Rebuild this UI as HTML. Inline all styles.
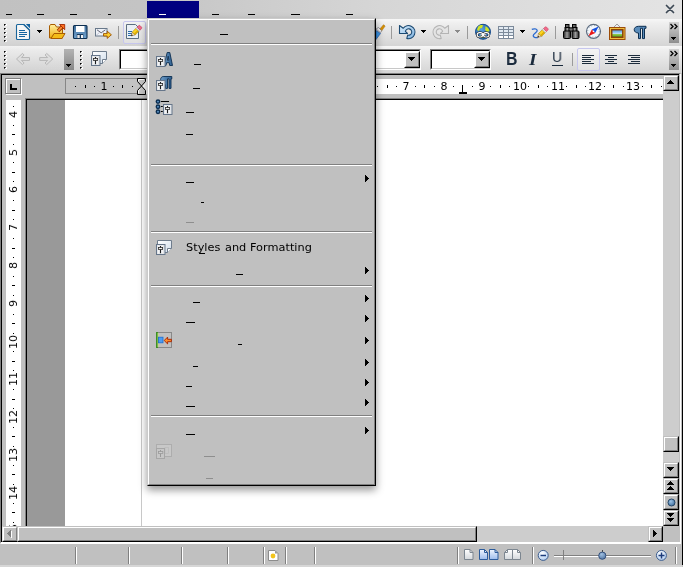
<!DOCTYPE html>
<html><head><meta charset="utf-8"><title>Writer</title>
<style>
*{box-sizing:border-box;margin:0;padding:0}
html,body{width:683px;height:567px;overflow:hidden;background:#c0c0c0;font-family:"DejaVu Sans","Liberation Sans",sans-serif;font-size:11px;color:#000}
div,svg,span{position:absolute}
span{will-change:transform}
#menubar{left:0;top:0;width:682px;height:19px;background:linear-gradient(90deg,#c1c1c1 0,#c4c4c4 140px,#d6d6d6 380px,#e4e4e4 683px)}
.u{height:1px;background:#000}
.ug{height:1px;background:#8e8e8e}
.tb{left:0;width:682px;height:27px;background:linear-gradient(90deg,rgba(0,0,0,.02),rgba(0,0,0,0) 60%),linear-gradient(180deg,#f7f7f7 0,#efefef 15%,#d5d5d5 100%)}
#work{left:0;top:73px;width:681px;height:471px;background:#c0c0c0;border-left:1px solid #808080;border-top:1px solid #808080;border-right:1px solid #fff;border-bottom:2px solid #fff}
#work2{left:1px;top:74px;width:678px;height:468px;border-left:1px solid #000;border-top:1px solid #000}
#status{left:0;top:544px;width:682px;height:23px;background:#c0c0c0;border-bottom:2px solid #d6d6d6}
#menu{left:147px;top:18px;width:229px;height:468px;background:#c0c0c0;border:1px solid;border-color:#cacaca #000 #000 #cacaca;box-shadow:0 4px 8px rgba(0,0,0,.42)}
#menu2{left:148px;top:19px;width:227px;height:466px;border:1px solid;border-color:#fff #808080 #808080 #fff}
.sep{left:151px;width:221px;height:2px;border-top:1px solid #808080;border-bottom:1px solid #fff}
.arr{left:365px;width:0;height:0;border-left:4px solid #000;border-top:3.5px solid transparent;border-bottom:3.5px solid transparent}
.rt{will-change:transform;font-size:11px;line-height:11px;white-space:nowrap}
.btn{background:#c0c0c0;border:1px solid;border-color:#c0c0c0 #000 #000 #c0c0c0}
.btn:after{content:"";position:absolute;left:0;top:0;right:0;bottom:0;border:1px solid;border-color:#fff #808080 #808080 #fff}
.ssep{width:2px;height:17px;top:547px;border-left:1px solid #808080;border-right:1px solid #fff}
.tsep{width:1px;height:13px;background:#9a9a9a}
.combo{height:21px;top:49px;background:#fff;border:1px solid;border-color:#808080 #fff #fff #808080}
.combo:after{content:"";position:absolute;left:0;top:0;right:0;bottom:0;border:1px solid;border-color:#000 #c8c8c8 #c8c8c8 #000}
.ovf{width:10px;height:21px}
.hl{border:1px solid #c6c6ee;border-radius:2px;background:rgba(255,255,255,.25)}
.dot{width:2px;height:2px;background:#000}
.dotw{width:2px;height:2px;background:#fff}
</style></head><body>
<div id="menubar"></div>
<div class="tb" style="top:19px"></div>
<div class="tb" style="top:46px"></div>
<div id="work"></div><div id="work2"></div>
<div id="status"></div>
<div style="left:682px;top:0;width:1px;height:565px;background:#000"></div>

<div class="u" style="left:6px;top:14px;width:6px"></div>
<div class="u" style="left:37px;top:14px;width:7px"></div>
<div class="u" style="left:70px;top:14px;width:7px"></div>
<div class="u" style="left:108px;top:14px;width:3px"></div>
<div class="u" style="left:212px;top:14px;width:7px"></div>
<div class="u" style="left:248px;top:14px;width:7px"></div>
<div class="u" style="left:291px;top:14px;width:9px"></div>
<div class="u" style="left:346px;top:14px;width:7px"></div>
<div style="left:147px;top:1px;width:52px;height:17px;background:#000080"></div>
<div class="u" style="left:159px;top:14px;width:7px;background:#fff"></div>
<svg style="left:663px;top:2px" width="14" height="14" viewBox="663 2 14 14"><path d="M666.5 5.5l7 7M673.5 5.5l-7 7" stroke="#3c4854" stroke-width="1.7" stroke-linecap="round"/></svg>
<div class="dotw" style="left:5px;top:24px"></div><div class="dot" style="left:4px;top:24px;background:#555"></div><div class="dot" style="left:4px;top:24px;width:1px;height:1px"></div><div class="dotw" style="left:5px;top:25px;width:1px;height:1px"></div>
<div class="dotw" style="left:5px;top:28px"></div><div class="dot" style="left:4px;top:28px;background:#555"></div><div class="dot" style="left:4px;top:28px;width:1px;height:1px"></div><div class="dotw" style="left:5px;top:29px;width:1px;height:1px"></div>
<div class="dotw" style="left:5px;top:32px"></div><div class="dot" style="left:4px;top:32px;background:#555"></div><div class="dot" style="left:4px;top:32px;width:1px;height:1px"></div><div class="dotw" style="left:5px;top:33px;width:1px;height:1px"></div>
<div class="dotw" style="left:5px;top:36px"></div><div class="dot" style="left:4px;top:36px;background:#555"></div><div class="dot" style="left:4px;top:36px;width:1px;height:1px"></div><div class="dotw" style="left:5px;top:37px;width:1px;height:1px"></div>
<div class="dotw" style="left:5px;top:40px"></div><div class="dot" style="left:4px;top:40px;background:#555"></div><div class="dot" style="left:4px;top:40px;width:1px;height:1px"></div><div class="dotw" style="left:5px;top:41px;width:1px;height:1px"></div>
<div class="dotw" style="left:5px;top:51px"></div><div class="dot" style="left:4px;top:51px;background:#555"></div><div class="dot" style="left:4px;top:51px;width:1px;height:1px"></div><div class="dotw" style="left:5px;top:52px;width:1px;height:1px"></div>
<div class="dotw" style="left:5px;top:55px"></div><div class="dot" style="left:4px;top:55px;background:#555"></div><div class="dot" style="left:4px;top:55px;width:1px;height:1px"></div><div class="dotw" style="left:5px;top:56px;width:1px;height:1px"></div>
<div class="dotw" style="left:5px;top:59px"></div><div class="dot" style="left:4px;top:59px;background:#555"></div><div class="dot" style="left:4px;top:59px;width:1px;height:1px"></div><div class="dotw" style="left:5px;top:60px;width:1px;height:1px"></div>
<div class="dotw" style="left:5px;top:63px"></div><div class="dot" style="left:4px;top:63px;background:#555"></div><div class="dot" style="left:4px;top:63px;width:1px;height:1px"></div><div class="dotw" style="left:5px;top:64px;width:1px;height:1px"></div>
<div class="dotw" style="left:5px;top:67px"></div><div class="dot" style="left:4px;top:67px;background:#555"></div><div class="dot" style="left:4px;top:67px;width:1px;height:1px"></div><div class="dotw" style="left:5px;top:68px;width:1px;height:1px"></div>
<div class="dotw" style="left:81px;top:51px"></div><div class="dot" style="left:80px;top:51px;background:#555"></div><div class="dot" style="left:80px;top:51px;width:1px;height:1px"></div><div class="dotw" style="left:81px;top:52px;width:1px;height:1px"></div>
<div class="dotw" style="left:81px;top:55px"></div><div class="dot" style="left:80px;top:55px;background:#555"></div><div class="dot" style="left:80px;top:55px;width:1px;height:1px"></div><div class="dotw" style="left:81px;top:56px;width:1px;height:1px"></div>
<div class="dotw" style="left:81px;top:59px"></div><div class="dot" style="left:80px;top:59px;background:#555"></div><div class="dot" style="left:80px;top:59px;width:1px;height:1px"></div><div class="dotw" style="left:81px;top:60px;width:1px;height:1px"></div>
<div class="dotw" style="left:81px;top:63px"></div><div class="dot" style="left:80px;top:63px;background:#555"></div><div class="dot" style="left:80px;top:63px;width:1px;height:1px"></div><div class="dotw" style="left:81px;top:64px;width:1px;height:1px"></div>
<div class="dotw" style="left:81px;top:67px"></div><div class="dot" style="left:80px;top:67px;background:#555"></div><div class="dot" style="left:80px;top:67px;width:1px;height:1px"></div><div class="dotw" style="left:81px;top:68px;width:1px;height:1px"></div>
<div class="tsep" style="left:118px;top:26px"></div>
<div class="tsep" style="left:391px;top:26px"></div>
<div class="tsep" style="left:467px;top:26px"></div>
<div class="tsep" style="left:555px;top:26px"></div>
<div class="tsep" style="left:572px;top:53px"></div>
<div style="left:37px;top:30px;width:5px;height:1px;background:#000"></div>
<div style="left:38px;top:31px;width:3px;height:1px;background:#000"></div>
<div style="left:39px;top:32px;width:1px;height:1px;background:#000"></div>
<div style="left:421px;top:30px;width:5px;height:1px;background:#000"></div>
<div style="left:422px;top:31px;width:3px;height:1px;background:#000"></div>
<div style="left:423px;top:32px;width:1px;height:1px;background:#000"></div>
<div style="left:455px;top:30px;width:5px;height:1px;background:#8a8a8a"></div>
<div style="left:456px;top:31px;width:3px;height:1px;background:#8a8a8a"></div>
<div style="left:457px;top:32px;width:1px;height:1px;background:#8a8a8a"></div>
<div style="left:520px;top:30px;width:5px;height:1px;background:#000"></div>
<div style="left:521px;top:31px;width:3px;height:1px;background:#000"></div>
<div style="left:522px;top:32px;width:1px;height:1px;background:#000"></div>
<div class="ovf" style="left:669px;top:22px;background:linear-gradient(180deg,#d2d2d2,#8e8e8e)"></div>
<div class="ovf" style="left:669px;top:49px;background:linear-gradient(180deg,#d2d2d2,#8e8e8e)"></div>
<div class="ovf" style="left:64px;top:49px;background:linear-gradient(180deg,#b4b4b4,#868686)"></div>
<div style="left:671px;top:37px;width:5px;height:1px;background:#000"></div>
<div style="left:672px;top:38px;width:3px;height:1px;background:#000"></div>
<div style="left:673px;top:39px;width:1px;height:1px;background:#000"></div>
<div style="left:671px;top:64px;width:5px;height:1px;background:#000"></div>
<div style="left:672px;top:65px;width:3px;height:1px;background:#000"></div>
<div style="left:673px;top:66px;width:1px;height:1px;background:#000"></div>
<div style="left:66px;top:64px;width:5px;height:1px;background:#000"></div>
<div style="left:67px;top:65px;width:3px;height:1px;background:#000"></div>
<div style="left:68px;top:66px;width:1px;height:1px;background:#000"></div>
<svg style="left:669px;top:23px" width="10" height="7" viewBox="0 0 10 7"><path d="M1.5 1l2.5 2.5L1.5 6M5.5 1L8 3.5 5.5 6" stroke="#000" stroke-width="1.3" fill="none"/></svg>
<svg style="left:669px;top:50px" width="10" height="7" viewBox="0 0 10 7"><path d="M1.5 1l2.5 2.5L1.5 6M5.5 1L8 3.5 5.5 6" stroke="#000" stroke-width="1.3" fill="none"/></svg>
<div class="hl" style="left:123px;top:21px;width:23px;height:23px"></div>
<div class="hl" style="left:577px;top:48px;width:23px;height:23px"></div>
<div class="combo" style="left:119px;width:302px"></div>
<div class="btn" style="left:404px;top:51px;width:16px;height:17px;border-color:#fff #000 #000 #fff"></div>
<div style="left:408px;top:57px;width:7px;height:1px;background:#000"></div>
<div style="left:409px;top:58px;width:5px;height:1px;background:#000"></div>
<div style="left:410px;top:59px;width:3px;height:1px;background:#000"></div>
<div style="left:411px;top:60px;width:1px;height:1px;background:#000"></div>
<div class="combo" style="left:430px;width:61px"></div>
<div class="btn" style="left:474px;top:51px;width:16px;height:17px;border-color:#fff #000 #000 #fff"></div>
<div style="left:478px;top:57px;width:7px;height:1px;background:#000"></div>
<div style="left:479px;top:58px;width:5px;height:1px;background:#000"></div>
<div style="left:480px;top:59px;width:3px;height:1px;background:#000"></div>
<div style="left:481px;top:60px;width:1px;height:1px;background:#000"></div>
<span style="left:505.5px;top:50px;font:bold 17.5px/19px 'Liberation Sans',sans-serif;color:#1a2a3c;transform:scaleX(.9);transform-origin:0 0">B</span>
<span style="left:529px;top:49.5px;font:italic bold 17.5px/19px 'Liberation Serif',serif;color:#1a2a3c;transform:scaleX(1.1);transform-origin:0 0">I</span>
<span style="left:552.3px;top:48px;font:15px/17px 'Liberation Sans',sans-serif;color:#1a2a3c;transform:scaleX(.93);transform-origin:0 0">U</span><div style="left:552px;top:65px;width:11px;height:1px;background:#1a2a3c"></div>
<div style="left:582px;top:55px;width:12px;height:1px;background:#1c2c3c"></div>
<div style="left:582px;top:57px;width:9px;height:1px;background:#1c2c3c"></div>
<div style="left:582px;top:59px;width:12px;height:1px;background:#1c2c3c"></div>
<div style="left:582px;top:61px;width:9px;height:1px;background:#1c2c3c"></div>
<div style="left:582px;top:63px;width:12px;height:1px;background:#1c2c3c"></div>
<div style="left:605px;top:55px;width:12px;height:1px;background:#1c2c3c"></div>
<div style="left:608px;top:57px;width:6px;height:1px;background:#1c2c3c"></div>
<div style="left:605px;top:59px;width:12px;height:1px;background:#1c2c3c"></div>
<div style="left:608px;top:61px;width:6px;height:1px;background:#1c2c3c"></div>
<div style="left:605px;top:63px;width:12px;height:1px;background:#1c2c3c"></div>
<div style="left:628px;top:55px;width:12px;height:1px;background:#1c2c3c"></div>
<div style="left:631px;top:57px;width:9px;height:1px;background:#1c2c3c"></div>
<div style="left:628px;top:59px;width:12px;height:1px;background:#1c2c3c"></div>
<div style="left:631px;top:61px;width:9px;height:1px;background:#1c2c3c"></div>
<div style="left:628px;top:63px;width:12px;height:1px;background:#1c2c3c"></div>
<svg style="left:0;top:19px" width="682" height="54" viewBox="0 19 682 54">
<defs>
<linearGradient id="gy" x1="0" y1="0" x2="0" y2="1"><stop offset="0" stop-color="#fff0a0"/><stop offset="1" stop-color="#f0b010"/></linearGradient>
<linearGradient id="gb" x1="0" y1="0" x2="0" y2="1"><stop offset="0" stop-color="#3f6c98"/><stop offset="1" stop-color="#74a6d2"/></linearGradient>
<linearGradient id="gu" x1="0" y1="0" x2="1" y2="1"><stop offset="0" stop-color="#d6ecfc"/><stop offset="1" stop-color="#7fb2e0"/></linearGradient>
<linearGradient id="gs" x1="0" y1="0" x2="1" y2="1"><stop offset="0" stop-color="#ffffff"/><stop offset="1" stop-color="#cfdcea"/></linearGradient>
<linearGradient id="gk" x1="0" y1="0" x2="1" y2="0"><stop offset="0" stop-color="#222"/><stop offset=".5" stop-color="#9a9a9a"/><stop offset="1" stop-color="#222"/></linearGradient>
<radialGradient id="gg" cx=".4" cy=".35" r=".7"><stop offset="0" stop-color="#5aa0e0"/><stop offset="1" stop-color="#1c5aa0"/></radialGradient>
<linearGradient id="gpic" x1="0" y1="0" x2="0" y2="1"><stop offset="0" stop-color="#3c8ce0"/><stop offset=".5" stop-color="#b8dcf4"/><stop offset=".55" stop-color="#a0d050"/><stop offset="1" stop-color="#3c9c20"/></linearGradient>
<g id="pin"><rect x=".5" y=".5" width="8.5" height="10" fill="#e2e5e9" stroke="#66768a"/><path d="M2.5 1.5v8M6.5 1.5v8" stroke="#f4f4f4" stroke-width="1"/><path d="M4.5 2v7.2" stroke="#1a1a1a" stroke-width="1"/><rect x="2.4" y="3.5" width="4.2" height="1.9" fill="#f0f0f0" stroke="#2a2a2a" stroke-width=".8"/></g>
<g id="pencil"><g transform="rotate(-45)"><path d="M0 0L3.6-2.1V2.1z" fill="#f2dcb4" stroke="#8a6a3a" stroke-width=".5"/><path d="M0 0l1.5-.9v1.8z" fill="#111"/><rect x="3.6" y="-2.1" width="5.2" height="4.2" fill="#fad420" stroke="#a88000" stroke-width=".5"/><path d="M3.6 1h5.2" stroke="#d8a400" stroke-width="1.2"/><rect x="8.8" y="-2.1" width="1.6" height="4.2" fill="#e4e8ec" stroke="#8890a0" stroke-width=".4"/><path d="M10.4-2.1h2a1.2 1.2 0 0 1 1.2 1.2v1.8a1.2 1.2 0 0 1-1.2 1.2h-2z" fill="#f26a8a" stroke="#c23456" stroke-width=".5"/></g></g>
</defs>
<!-- new doc -->
<path d="M17.5 24.5h6.3l5.7 5.7v8.3a1 1 0 0 1-1 1h-11a1 1 0 0 1-1-1v-13a1 1 0 0 1 1-1z" fill="#f6f6f6" stroke="#19659b" stroke-width="1.1"/>
<path d="M23.8 24.5l5.7 5.7" stroke="#19659b" stroke-width="1.1"/><path d="M25.8 24h4.2v4.2z" fill="#1262a0"/>
<path d="M19 30.5h6M19 32.5h8M19 34.5h8M19 36.5h6" stroke="#1565a0" stroke-width="1"/>
<!-- open -->
<path d="M49.5 38V26l1-1.5h4.5l1.5 2.5h6v11z" fill="url(#gy)" stroke="#a85c00" stroke-width="1"/>
<path d="M51 38.5l3-5h11l-3 5z" fill="#f4bc18" stroke="#a85c00" stroke-width="1"/>
<path d="M58 31l4-4" stroke="#a03000" stroke-width="3.6"/><path d="M58.3 30.7l4-4" stroke="#ff9030" stroke-width="1.8"/><path d="M59.5 24.5h5.2v5.2z" fill="#ff7020" stroke="#a02800" stroke-width=".9"/>
<!-- save -->
<rect x="73.5" y="25.5" width="13.5" height="13" rx="1" fill="url(#gb)" stroke="#0c2e50" stroke-width="1.1"/>
<rect x="76" y="26" width="8.5" height="6" fill="#fff"/><rect x="76.8" y="34" width="6.5" height="4.5" fill="#16385c"/><rect x="77.3" y="35" width="2.4" height="3" fill="#e8e8e8"/><rect x="81" y="35" width="2" height="3" fill="#f4f4f4"/>
<!-- mail -->
<rect x="95.5" y="28.5" width="11.5" height="7.5" fill="#eef2f8" stroke="#68788a" stroke-width="1"/><path d="M97 29.8l4.2 3 4.2-3" fill="none" stroke="#556" stroke-width=".9"/><path d="M96 35.5l3.5-3M106.5 35.5l-3.5-3" stroke="#aab" stroke-width=".6"/>
<path d="M103.5 33.6h3.7v-2.4l4.2 3.6-4.2 3.6v-2.4h-3.7z" fill="#ffd030" stroke="#9a5000" stroke-width=".9"/>
<!-- edit doc -->
<path d="M126.5 24.5h9l3 3v11h-12z" fill="#eaf0f6" stroke="#5c6e80" stroke-width="1"/><path d="M128 31.5h4M128 33.5h4M128 35.5h4" stroke="#2a6aaa" stroke-width="1"/>
<use href="#pencil" x="131.2" y="36"/>
<!-- paintbrush partial -->
<path d="M379.5 29.5l4-4.8 1.6 1.4-3.6 5z" fill="#d89000" stroke="#a06800" stroke-width=".5"/><path d="M376 29l2.5-1.5 3.2 3.2-1.2 2z" fill="#f0f0f0" stroke="#667" stroke-width=".6"/><path d="M376 30.5l4.5 3-4.5 6z" fill="#3c98e8" stroke="#1c50a0" stroke-width=".6"/>
<!-- undo -->
<path d="M399.5 25.5V33.5H407.5L405.4 31.4A3.2 3.2 0 1 1 407.7 35.1L406.8 38.4A6.5 6.5 0 1 0 403.2 28.3Z" fill="url(#gu)" stroke="#1c4a72" stroke-width="1.1" stroke-linejoin="round"/>
<!-- redo (disabled) -->
<path transform="translate(848 0) scale(-1 1)" d="M399.5 25.5V33.5H407.5L405.4 31.4A3.2 3.2 0 1 1 407.7 35.1L406.8 38.4A6.5 6.5 0 1 0 403.2 28.3Z" fill="#e4e4e4" stroke="#b4b4b4" stroke-width="1.1" stroke-linejoin="round"/>
<!-- hyperlink globe -->
<circle cx="483" cy="31.8" r="7.5" fill="url(#gg)" stroke="#164a88" stroke-width="1"/>
<path d="M478 27c1.5-2 4-2.5 5-1.5l-1 2.5-2 .5-1 2.5-2-1zM485 26.5c2 0 4 2 4.5 4.5l-2.5 1-2-2 .5-2z" fill="#cfe422"/><path d="M480 36l2-1.5 2 1.5-1 2.5z" fill="#7cb828"/>
<g fill="none"><rect x="477.2" y="32.6" width="5.6" height="4.4" rx="2.2" stroke="#1a1a1a" stroke-width="2.1"/><rect x="483.4" y="32.6" width="5.6" height="4.4" rx="2.2" stroke="#1a1a1a" stroke-width="2.1"/><path d="M481 34.8h5" stroke="#1a1a1a" stroke-width="2.1"/>
<rect x="477.2" y="32.6" width="5.6" height="4.4" rx="2.2" stroke="#fff" stroke-width="1.1"/><rect x="483.4" y="32.6" width="5.6" height="4.4" rx="2.2" stroke="#fff" stroke-width="1.1"/><path d="M480.6 34.8h5.6" stroke="#fff" stroke-width="1.1"/></g>
<!-- table -->
<rect x="498" y="26" width="16" height="13" fill="#7c8a9a"/>

<rect x="499" y="27" width="4" height="2" fill="#e2eaf2"/>
<rect x="504" y="27" width="4" height="2" fill="#e2eaf2"/>
<rect x="509" y="27" width="4" height="2" fill="#e2eaf2"/>
<rect x="499" y="30" width="4" height="2" fill="#e2eaf2"/>
<rect x="504" y="30" width="4" height="2" fill="#e2eaf2"/>
<rect x="509" y="30" width="4" height="2" fill="#e2eaf2"/>
<rect x="499" y="33" width="4" height="2" fill="#e2eaf2"/>
<rect x="504" y="33" width="4" height="2" fill="#e2eaf2"/>
<rect x="509" y="33" width="4" height="2" fill="#e2eaf2"/>
<rect x="499" y="36" width="4" height="2" fill="#ffffff"/>
<rect x="504" y="36" width="4" height="2" fill="#ffffff"/>
<rect x="509" y="36" width="4" height="2" fill="#ffffff"/>
<!-- draw -->
<path d="M531.8 29.3c2.2-.8 5-.6 5.4 1 .5 2-4 3.2-4 5.4 0 1.6 2.2 2.2 4.6 1.8" fill="none" stroke="#2a6ad0" stroke-width="1.3"/>
<use href="#pencil" x="537.6" y="37.4"/>
<!-- binoculars -->
<rect x="565.5" y="24.5" width="3.5" height="3" fill="#666" stroke="#000"/><rect x="572.5" y="24.5" width="3.5" height="3" fill="#666" stroke="#000"/>
<rect x="565" y="27.5" width="5" height="4" fill="url(#gk)" stroke="#000"/><rect x="572" y="27.5" width="5" height="4" fill="url(#gk)" stroke="#000"/>
<rect x="569" y="28" width="4" height="3" fill="#777" stroke="#000" stroke-width=".8"/>
<rect x="563.5" y="31" width="7" height="7.5" rx="1" fill="url(#gk)" stroke="#000"/><rect x="572" y="31" width="7" height="7.5" rx="1" fill="url(#gk)" stroke="#000"/>
<!-- compass -->
<circle cx="593.5" cy="31.3" r="7" fill="#f4f8fc" stroke="#5c6c80" stroke-width="1.2"/>
<circle cx="593.5" cy="31.3" r="5.8" fill="none" stroke="#8090a0" stroke-width="1" stroke-dasharray=".8 2.24"/>
<path d="M598.6 26.4l-6.8 3.2 3.4 3.4z" fill="#1450e0"/><path d="M588.4 36.2l6.8-3.2-3.4-3.4z" fill="#e81818"/><circle cx="593.5" cy="31.3" r=".9" fill="#fff"/>
<!-- gallery -->
<path d="M614 27l3-3 3 3" fill="none" stroke="#888" stroke-width=".8"/>
<rect x="609.5" y="27.5" width="15.5" height="12" fill="#f2c440" stroke="#9c4c08" stroke-width="1"/><rect x="611.7" y="29.7" width="11.1" height="7.6" fill="url(#gpic)" stroke="#8a4008" stroke-width="1.5"/>
<!-- pilcrow -->
<path d="M646 26.3h-7.5c-2.6 0-4.3 1.5-4.3 3.4s1.7 3.3 4.3 3.3v5.6h2v-10.3h2v10.3h2v-10.3h1.5z" fill="#5a8cba" stroke="#0c2e50" stroke-width="1" stroke-linejoin="round"/>
<!-- back/forward disabled -->
<path d="M16.5 59l6-5.6 1.6 1.6-2.6 2.6h8v2.8h-8l2.6 2.6-1.6 1.6z" fill="#dedede" stroke="#b6b6b6" stroke-width="1" stroke-linejoin="round"/>
<path d="M52.7 59l-6-5.6-1.6 1.6 2.6 2.6h-8v2.8h8l-2.6 2.6 1.6 1.6z" fill="#dedede" stroke="#b6b6b6" stroke-width="1" stroke-linejoin="round"/>
<!-- styles -->
<g id="sty"><path d="M92.5 51.5h14v8l-4 4h-10z" fill="url(#gs)" stroke="#6e7c8c"/><path d="M102.5 63.5v-4h4" fill="#fff" stroke="#6e7c8c"/><use href="#pin" x="91" y="55"/></g>
</svg>
<div style="left:6px;top:79px;width:16px;height:16px;border:1px solid #fff"></div>
<div style="left:5px;top:78px;width:16px;height:16px;border:1px solid #808080"></div>
<div style="left:10px;top:84px;width:2px;height:6px;background:#000"></div><div style="left:10px;top:88px;width:7px;height:2px;background:#000"></div>
<div style="left:65px;top:79px;width:598px;height:15px;background:#fff"></div>
<div style="left:65px;top:78px;width:77px;height:16px;background:#c3c3c3;border:1px solid #868686"></div>
<div style="left:6px;top:100px;width:15px;height:426px;background:#fff"></div>
<div style="left:25px;top:98px;width:638px;height:428px;background:#fff;border-left:1px solid #808080;border-top:1px solid #808080"></div>
<div style="left:26px;top:99px;width:637px;height:427px;border-left:1px solid #000;border-top:1px solid #000"></div>
<div style="left:27px;top:100px;width:38px;height:426px;background:#999"></div>
<div style="left:141px;top:100px;width:1px;height:426px;background:#c8c8c8"></div>
<div style="left:75px;top:86px;width:1px;height:1px;background:#000"></div>
<div style="left:85px;top:85px;width:1px;height:3px;background:#000"></div>
<div style="left:94px;top:86px;width:1px;height:1px;background:#000"></div>
<span class="rt" style="left:94px;top:81px;width:20px;text-align:center">1</span>
<div style="left:113px;top:86px;width:1px;height:1px;background:#000"></div>
<div style="left:122px;top:85px;width:1px;height:3px;background:#000"></div>
<div style="left:132px;top:86px;width:1px;height:1px;background:#000"></div>
<div style="left:150px;top:86px;width:1px;height:1px;background:#000"></div>
<div style="left:160px;top:85px;width:1px;height:3px;background:#000"></div>
<div style="left:169px;top:86px;width:1px;height:1px;background:#000"></div>
<span class="rt" style="left:169.6px;top:81px;width:20px;text-align:center">1</span>
<div style="left:188px;top:86px;width:1px;height:1px;background:#000"></div>
<div style="left:198px;top:85px;width:1px;height:3px;background:#000"></div>
<div style="left:207px;top:86px;width:1px;height:1px;background:#000"></div>
<span class="rt" style="left:207.4px;top:81px;width:20px;text-align:center">2</span>
<div style="left:226px;top:86px;width:1px;height:1px;background:#000"></div>
<div style="left:235px;top:85px;width:1px;height:3px;background:#000"></div>
<div style="left:245px;top:86px;width:1px;height:1px;background:#000"></div>
<span class="rt" style="left:245.2px;top:81px;width:20px;text-align:center">3</span>
<div style="left:264px;top:86px;width:1px;height:1px;background:#000"></div>
<div style="left:273px;top:85px;width:1px;height:3px;background:#000"></div>
<div style="left:283px;top:86px;width:1px;height:1px;background:#000"></div>
<span class="rt" style="left:283px;top:81px;width:20px;text-align:center">4</span>
<div style="left:301px;top:86px;width:1px;height:1px;background:#000"></div>
<div style="left:311px;top:85px;width:1px;height:3px;background:#000"></div>
<div style="left:320px;top:86px;width:1px;height:1px;background:#000"></div>
<span class="rt" style="left:320.8px;top:81px;width:20px;text-align:center">5</span>
<div style="left:339px;top:86px;width:1px;height:1px;background:#000"></div>
<div style="left:349px;top:85px;width:1px;height:3px;background:#000"></div>
<div style="left:358px;top:86px;width:1px;height:1px;background:#000"></div>
<span class="rt" style="left:358.6px;top:81px;width:20px;text-align:center">6</span>
<div style="left:377px;top:86px;width:1px;height:1px;background:#000"></div>
<div style="left:387px;top:85px;width:1px;height:3px;background:#000"></div>
<div style="left:396px;top:86px;width:1px;height:1px;background:#000"></div>
<span class="rt" style="left:396.4px;top:81px;width:20px;text-align:center">7</span>
<div style="left:415px;top:86px;width:1px;height:1px;background:#000"></div>
<div style="left:424px;top:85px;width:1px;height:3px;background:#000"></div>
<div style="left:434px;top:86px;width:1px;height:1px;background:#000"></div>
<span class="rt" style="left:434.2px;top:81px;width:20px;text-align:center">8</span>
<div style="left:453px;top:86px;width:1px;height:1px;background:#000"></div>
<div style="left:462px;top:85px;width:1px;height:3px;background:#000"></div>
<div style="left:472px;top:86px;width:1px;height:1px;background:#000"></div>
<span class="rt" style="left:472px;top:81px;width:20px;text-align:center">9</span>
<div style="left:490px;top:86px;width:1px;height:1px;background:#000"></div>
<div style="left:500px;top:85px;width:1px;height:3px;background:#000"></div>
<div style="left:509px;top:86px;width:1px;height:1px;background:#000"></div>
<span class="rt" style="left:509.8px;top:81px;width:20px;text-align:center">10</span>
<div style="left:528px;top:86px;width:1px;height:1px;background:#000"></div>
<div style="left:538px;top:85px;width:1px;height:3px;background:#000"></div>
<div style="left:547px;top:86px;width:1px;height:1px;background:#000"></div>
<span class="rt" style="left:547.6px;top:81px;width:20px;text-align:center">11</span>
<div style="left:566px;top:86px;width:1px;height:1px;background:#000"></div>
<div style="left:576px;top:85px;width:1px;height:3px;background:#000"></div>
<div style="left:585px;top:86px;width:1px;height:1px;background:#000"></div>
<span class="rt" style="left:585.4px;top:81px;width:20px;text-align:center">12</span>
<div style="left:604px;top:86px;width:1px;height:1px;background:#000"></div>
<div style="left:613px;top:85px;width:1px;height:3px;background:#000"></div>
<div style="left:623px;top:86px;width:1px;height:1px;background:#000"></div>
<span class="rt" style="left:623.2px;top:81px;width:20px;text-align:center">13</span>
<div style="left:642px;top:86px;width:1px;height:1px;background:#000"></div>
<div style="left:651px;top:85px;width:1px;height:3px;background:#000"></div>
<div style="left:661px;top:86px;width:1px;height:1px;background:#000"></div>
<div style="left:462px;top:88px;width:1px;height:6px;background:#000"></div><div style="left:459px;top:92px;width:8px;height:2px;background:#000"></div>
<svg style="left:136px;top:77px" width="11" height="19" viewBox="0 0 11 19"><path d="M1.5 1.5h8v3l-4 4.5 4 4.5v4h-8v-4l4-4.5-4-4.5z" fill="#c6c6c6" stroke="#000" stroke-width="1"/><path d="M2.5 4.2v-1.7h5.5M2.5 16.5v-2.7l1.5-1.7" fill="none" stroke="#fff" stroke-width="1"/></svg>
<div style="left:6px;top:100px;width:15px;height:426px;overflow:hidden">
<div style="left:7px;top:6px;width:1px;height:1px;background:#000"></div>
<span class="rt" style="left:2px;top:4.7px;width:11px;height:20px;text-align:center;writing-mode:vertical-rl;transform:rotate(180deg)">4</span>
<div style="left:7px;top:25px;width:1px;height:1px;background:#000"></div>
<div style="left:6px;top:34px;width:3px;height:1px;background:#000"></div>
<div style="left:7px;top:44px;width:1px;height:1px;background:#000"></div>
<span class="rt" style="left:2px;top:42.5px;width:11px;height:20px;text-align:center;writing-mode:vertical-rl;transform:rotate(180deg)">5</span>
<div style="left:7px;top:62px;width:1px;height:1px;background:#000"></div>
<div style="left:6px;top:72px;width:3px;height:1px;background:#000"></div>
<div style="left:7px;top:81px;width:1px;height:1px;background:#000"></div>
<span class="rt" style="left:2px;top:80.3px;width:11px;height:20px;text-align:center;writing-mode:vertical-rl;transform:rotate(180deg)">6</span>
<div style="left:7px;top:100px;width:1px;height:1px;background:#000"></div>
<div style="left:6px;top:110px;width:3px;height:1px;background:#000"></div>
<div style="left:7px;top:119px;width:1px;height:1px;background:#000"></div>
<span class="rt" style="left:2px;top:118.1px;width:11px;height:20px;text-align:center;writing-mode:vertical-rl;transform:rotate(180deg)">7</span>
<div style="left:7px;top:138px;width:1px;height:1px;background:#000"></div>
<div style="left:6px;top:148px;width:3px;height:1px;background:#000"></div>
<div style="left:7px;top:157px;width:1px;height:1px;background:#000"></div>
<span class="rt" style="left:2px;top:155.9px;width:11px;height:20px;text-align:center;writing-mode:vertical-rl;transform:rotate(180deg)">8</span>
<div style="left:7px;top:176px;width:1px;height:1px;background:#000"></div>
<div style="left:6px;top:185px;width:3px;height:1px;background:#000"></div>
<div style="left:7px;top:195px;width:1px;height:1px;background:#000"></div>
<span class="rt" style="left:2px;top:193.7px;width:11px;height:20px;text-align:center;writing-mode:vertical-rl;transform:rotate(180deg)">9</span>
<div style="left:7px;top:214px;width:1px;height:1px;background:#000"></div>
<div style="left:6px;top:223px;width:3px;height:1px;background:#000"></div>
<div style="left:7px;top:233px;width:1px;height:1px;background:#000"></div>
<span class="rt" style="left:2px;top:231.5px;width:11px;height:20px;text-align:center;writing-mode:vertical-rl;transform:rotate(180deg)">10</span>
<div style="left:7px;top:251px;width:1px;height:1px;background:#000"></div>
<div style="left:6px;top:261px;width:3px;height:1px;background:#000"></div>
<div style="left:7px;top:270px;width:1px;height:1px;background:#000"></div>
<span class="rt" style="left:2px;top:269.3px;width:11px;height:20px;text-align:center;writing-mode:vertical-rl;transform:rotate(180deg)">11</span>
<div style="left:7px;top:289px;width:1px;height:1px;background:#000"></div>
<div style="left:6px;top:299px;width:3px;height:1px;background:#000"></div>
<div style="left:7px;top:308px;width:1px;height:1px;background:#000"></div>
<span class="rt" style="left:2px;top:307.1px;width:11px;height:20px;text-align:center;writing-mode:vertical-rl;transform:rotate(180deg)">12</span>
<div style="left:7px;top:327px;width:1px;height:1px;background:#000"></div>
<div style="left:6px;top:336px;width:3px;height:1px;background:#000"></div>
<div style="left:7px;top:346px;width:1px;height:1px;background:#000"></div>
<span class="rt" style="left:2px;top:344.9px;width:11px;height:20px;text-align:center;writing-mode:vertical-rl;transform:rotate(180deg)">13</span>
<div style="left:7px;top:365px;width:1px;height:1px;background:#000"></div>
<div style="left:6px;top:374px;width:3px;height:1px;background:#000"></div>
<div style="left:7px;top:384px;width:1px;height:1px;background:#000"></div>
<span class="rt" style="left:2px;top:382.7px;width:11px;height:20px;text-align:center;writing-mode:vertical-rl;transform:rotate(180deg)">14</span>
<div style="left:7px;top:403px;width:1px;height:1px;background:#000"></div>
<div style="left:6px;top:412px;width:3px;height:1px;background:#000"></div>
<div style="left:7px;top:422px;width:1px;height:1px;background:#000"></div>
<span class="rt" style="left:2px;top:420.5px;width:11px;height:20px;text-align:center;writing-mode:vertical-rl;transform:rotate(180deg)">15</span>
</div>
<div style="left:663px;top:75px;width:16px;height:451px;background:#cdcdcd"></div>
<div style="left:2px;top:526px;width:661px;height:16px;background:#cdcdcd"></div>
<div class="btn" style="left:663px;top:75px;width:16px;height:16px"><div style="left:3px;top:7px;width:7px;height:1px;background:#000"></div><div style="left:4px;top:6px;width:5px;height:1px;background:#000"></div><div style="left:5px;top:5px;width:3px;height:1px;background:#000"></div><div style="left:6px;top:4px;width:1px;height:1px;background:#000"></div></div>
<div class="btn" style="left:663px;top:436px;width:16px;height:16px"></div>
<div class="btn" style="left:663px;top:462px;width:16px;height:16px"><div style="left:3px;top:4px;width:7px;height:1px;background:#000"></div><div style="left:4px;top:5px;width:5px;height:1px;background:#000"></div><div style="left:5px;top:6px;width:3px;height:1px;background:#000"></div><div style="left:6px;top:7px;width:1px;height:1px;background:#000"></div></div>
<div class="btn" style="left:663px;top:478px;width:16px;height:16px"><div style="left:3px;top:5px;width:7px;height:1px;background:#000"></div><div style="left:4px;top:4px;width:5px;height:1px;background:#000"></div><div style="left:5px;top:3px;width:3px;height:1px;background:#000"></div><div style="left:6px;top:2px;width:1px;height:1px;background:#000"></div><div style="left:3px;top:10px;width:7px;height:1px;background:#000"></div><div style="left:4px;top:9px;width:5px;height:1px;background:#000"></div><div style="left:5px;top:8px;width:3px;height:1px;background:#000"></div><div style="left:6px;top:7px;width:1px;height:1px;background:#000"></div></div>
<div class="btn" style="left:663px;top:494px;width:16px;height:16px"><svg style="left:2px;top:2px" width="11" height="11" viewBox="0 0 11 11"><defs><radialGradient id="nv" cx=".4" cy=".35" r=".7"><stop offset="0" stop-color="#9cc4e8"/><stop offset="1" stop-color="#3c6c9c"/></radialGradient></defs><circle cx="5.5" cy="5.5" r="3.5" fill="url(#nv)" stroke="#284868" stroke-width="1"/></svg></div>
<div class="btn" style="left:663px;top:510px;width:16px;height:16px"><div style="left:3px;top:2px;width:7px;height:1px;background:#000"></div><div style="left:4px;top:3px;width:5px;height:1px;background:#000"></div><div style="left:5px;top:4px;width:3px;height:1px;background:#000"></div><div style="left:6px;top:5px;width:1px;height:1px;background:#000"></div><div style="left:3px;top:7px;width:7px;height:1px;background:#000"></div><div style="left:4px;top:8px;width:5px;height:1px;background:#000"></div><div style="left:5px;top:9px;width:3px;height:1px;background:#000"></div><div style="left:6px;top:10px;width:1px;height:1px;background:#000"></div></div>
<div class="btn" style="left:2px;top:526px;width:16px;height:16px;border-color:#c0c0c0 #c0c0c0 #000 #e4e4e4"><div style="left:8px;top:4px;width:1px;height:7px;background:#fff"></div><div style="left:7px;top:5px;width:1px;height:5px;background:#fff"></div><div style="left:6px;top:6px;width:1px;height:3px;background:#fff"></div><div style="left:5px;top:7px;width:1px;height:1px;background:#fff"></div><div style="left:7px;top:3px;width:1px;height:7px;background:#808080"></div><div style="left:6px;top:4px;width:1px;height:5px;background:#808080"></div><div style="left:5px;top:5px;width:1px;height:3px;background:#808080"></div><div style="left:4px;top:6px;width:1px;height:1px;background:#808080"></div></div>
<div class="btn" style="left:17px;top:526px;width:460px;height:16px"></div>
<div class="btn" style="left:648px;top:526px;width:15px;height:16px"><div style="left:4px;top:3px;width:1px;height:7px;background:#000"></div><div style="left:5px;top:4px;width:1px;height:5px;background:#000"></div><div style="left:6px;top:5px;width:1px;height:3px;background:#000"></div><div style="left:7px;top:6px;width:1px;height:1px;background:#000"></div></div>
<div class="ssep" style="left:75px"></div>
<div class="ssep" style="left:128px"></div>
<div class="ssep" style="left:181px"></div>
<div class="ssep" style="left:227px"></div>
<div class="ssep" style="left:263px"></div>
<div class="ssep" style="left:285px"></div>
<div class="ssep" style="left:314px"></div>
<div class="ssep" style="left:457px"></div>
<div class="ssep" style="left:532px"></div>
<div class="ssep" style="left:675px"></div>
<svg style="left:260px;top:545px" width="420" height="20" viewBox="260 545 420 20">
<defs><linearGradient id="pg" x1="0" y1="0" x2="0" y2="1"><stop offset="0" stop-color="#fff"/><stop offset="1" stop-color="#d4d8dc"/></linearGradient>
<linearGradient id="pb" x1="0" y1="0" x2="0" y2="1"><stop offset="0" stop-color="#f0f6ff"/><stop offset="1" stop-color="#9cbcec"/></linearGradient>
<radialGradient id="zb" cx=".4" cy=".3" r=".8"><stop offset="0" stop-color="#fff"/><stop offset="1" stop-color="#a8c8f0"/></radialGradient>
<radialGradient id="zt" cx=".4" cy=".3" r=".8"><stop offset="0" stop-color="#a0c0e0"/><stop offset="1" stop-color="#4c70a0"/></radialGradient></defs>
<path d="M268.5 550.5h6.5l3 3v7h-9.5z" fill="#fff" stroke="#8c8c8c"/><path d="M275 550.5l3 3h-3z" fill="#999"/><circle cx="273" cy="556" r="2.4" fill="#f2c41c"/>
<path d="M464.5 549.5h5.5l3 3v7h-8.5z" fill="url(#pg)" stroke="#7c8690"/><path d="M470 549.5v3h3" fill="none" stroke="#7c8690"/>
<path d="M479.5 549.5h5l3 3v7h-8zM489.5 549.5h5.5l3 3v7h-8.5z" fill="url(#pb)" stroke="#2c5c9c"/><path d="M484.5 549.5v3h3M495 549.5v3h3" fill="none" stroke="#2c5c9c"/>
<path d="M504.5 559.5v-7l3-3h5v10zM512.5 549.5h5l3 3v7h-8z" fill="url(#pg)" stroke="#7c8690"/><path d="M507.5 549.5v3h-3M517.5 549.5v3h3" fill="none" stroke="#7c8690"/>
<circle cx="543.2" cy="555.4" r="5" fill="url(#zb)" stroke="#3c5c8c" stroke-width="1"/><path d="M540.5 555.5h5.5" stroke="#1c3c7c" stroke-width="1.5"/>
<circle cx="661.4" cy="555.4" r="5" fill="url(#zb)" stroke="#3c5c8c" stroke-width="1"/><path d="M658.5 555.5h6M661.5 552.5v6" stroke="#1c3c7c" stroke-width="1.5"/>
<path d="M554 555.5h97" stroke="#808080"/><path d="M554 556.5h97" stroke="#fff"/><path d="M563.5 550v10" stroke="#808080"/><path d="M602.5 550v2" stroke="#444"/>
<circle cx="602.3" cy="555.7" r="3.6" fill="url(#zt)" stroke="#34507c" stroke-width="1"/>
</svg>
<div id="menu"></div><div id="menu2"></div>
<div class="sep" style="top:43px"></div>
<div class="sep" style="top:164px"></div>
<div class="sep" style="top:231px"></div>
<div class="sep" style="top:285px"></div>
<div class="sep" style="top:415px"></div>
<div class="u" style="left:220px;top:34px;width:8px"></div>
<div class="u" style="left:194px;top:64px;width:7px"></div>
<div class="u" style="left:193px;top:88px;width:7px"></div>
<div class="u" style="left:186px;top:112px;width:8px"></div>
<div class="u" style="left:186px;top:134px;width:7px"></div>
<div class="u" style="left:186px;top:182px;width:8px"></div>
<div class="u" style="left:201px;top:202px;width:3px"></div>
<div class="u" style="left:236px;top:274px;width:7px"></div>
<div class="u" style="left:193px;top:302px;width:7px"></div>
<div class="u" style="left:186px;top:322px;width:9px"></div>
<div class="u" style="left:238px;top:344px;width:4px"></div>
<div class="u" style="left:193px;top:366px;width:5px"></div>
<div class="u" style="left:186px;top:386px;width:6px"></div>
<div class="u" style="left:186px;top:406px;width:9px"></div>
<div class="u" style="left:186px;top:434px;width:9px"></div>
<div class="ug" style="left:186px;top:222px;width:8px"></div>
<div class="ug" style="left:204px;top:456px;width:11px"></div>
<div class="ug" style="left:206px;top:478px;width:7px"></div>
<div style="left:365px;top:175px;width:1px;height:7px;background:#000"></div><div style="left:366px;top:176px;width:1px;height:5px;background:#000"></div><div style="left:367px;top:177px;width:1px;height:3px;background:#000"></div><div style="left:368px;top:178px;width:1px;height:1px;background:#000"></div>
<div style="left:365px;top:267px;width:1px;height:7px;background:#000"></div><div style="left:366px;top:268px;width:1px;height:5px;background:#000"></div><div style="left:367px;top:269px;width:1px;height:3px;background:#000"></div><div style="left:368px;top:270px;width:1px;height:1px;background:#000"></div>
<div style="left:365px;top:295px;width:1px;height:7px;background:#000"></div><div style="left:366px;top:296px;width:1px;height:5px;background:#000"></div><div style="left:367px;top:297px;width:1px;height:3px;background:#000"></div><div style="left:368px;top:298px;width:1px;height:1px;background:#000"></div>
<div style="left:365px;top:315px;width:1px;height:7px;background:#000"></div><div style="left:366px;top:316px;width:1px;height:5px;background:#000"></div><div style="left:367px;top:317px;width:1px;height:3px;background:#000"></div><div style="left:368px;top:318px;width:1px;height:1px;background:#000"></div>
<div style="left:365px;top:337px;width:1px;height:7px;background:#000"></div><div style="left:366px;top:338px;width:1px;height:5px;background:#000"></div><div style="left:367px;top:339px;width:1px;height:3px;background:#000"></div><div style="left:368px;top:340px;width:1px;height:1px;background:#000"></div>
<div style="left:365px;top:359px;width:1px;height:7px;background:#000"></div><div style="left:366px;top:360px;width:1px;height:5px;background:#000"></div><div style="left:367px;top:361px;width:1px;height:3px;background:#000"></div><div style="left:368px;top:362px;width:1px;height:1px;background:#000"></div>
<div style="left:365px;top:379px;width:1px;height:7px;background:#000"></div><div style="left:366px;top:380px;width:1px;height:5px;background:#000"></div><div style="left:367px;top:381px;width:1px;height:3px;background:#000"></div><div style="left:368px;top:382px;width:1px;height:1px;background:#000"></div>
<div style="left:365px;top:399px;width:1px;height:7px;background:#000"></div><div style="left:366px;top:400px;width:1px;height:5px;background:#000"></div><div style="left:367px;top:401px;width:1px;height:3px;background:#000"></div><div style="left:368px;top:402px;width:1px;height:1px;background:#000"></div>
<div style="left:365px;top:427px;width:1px;height:7px;background:#000"></div><div style="left:366px;top:428px;width:1px;height:5px;background:#000"></div><div style="left:367px;top:429px;width:1px;height:3px;background:#000"></div><div style="left:368px;top:430px;width:1px;height:1px;background:#000"></div>
<div class="u" style="left:199px;top:253px;width:6px"></div>
<span style="left:186px;top:240px;font-size:11.33px;line-height:14px;white-space:nowrap">Styles</span>
<span style="left:225px;top:240px;font-size:11.33px;line-height:14px;white-space:nowrap">and</span>
<span style="left:250px;top:240px;font-size:11.33px;line-height:14px;white-space:nowrap">Formatting</span>
<svg style="left:150px;top:48px" width="30" height="420" viewBox="150 48 30 420">
<defs><linearGradient id="ga" x1="0" y1="0" x2="1" y2="0"><stop offset="0" stop-color="#6c9cc8"/><stop offset="1" stop-color="#2c5c8c"/></linearGradient></defs>
<!-- character -->
<path d="M164 65.5l3.2-13h2.6l2.7 13h-2.8l-.5-2.8h-2.6l-.6 2.8zM167.3 60.2h1.6l-.7-4z" fill="url(#ga)" stroke="#0c2e50" stroke-width=".9" stroke-linejoin="round"/>
<use href="#pin" x="156" y="56"/>
<!-- paragraph -->
<path d="M171.8 76.5h-8.6c-1.4 0-2.6 1.4-2.6 3v2.5c0 1.4 1.2 2.6 2.6 2.6h2.3v3.8h2v-9.5h1.5v9.5h2v-9.5h.8z" fill="url(#ga)" stroke="#0c2e50" stroke-width=".9" stroke-linejoin="round"/>
<use href="#pin" x="156" y="80"/>
<!-- bullets -->
<g fill="#5c94c8" stroke="#0c2e50" stroke-width="1.5"><circle cx="158" cy="101.6" r="1.7"/><circle cx="158" cy="106.7" r="1.7"/><circle cx="158" cy="111.8" r="1.7"/></g>
<path d="M161 101.5h8M161 106.5h1.8M161 111.5h1.8" stroke="#000" stroke-width="1.1"/>
<use href="#pin" x="163" y="104"/>
<!-- styles -->
<use href="#sty" x="65" y="189"/>
<!-- align -->
<rect x="156.5" y="332.5" width="15" height="15" fill="none" stroke="#888"/><path d="M157 332v16" stroke="#2c9010" stroke-width="1.6"/><path d="M158 333v14" stroke="#c4e468" stroke-width=".8"/>
<rect x="158.4" y="337.2" width="4.6" height="5.6" fill="#4c9cf0" stroke="#1c6cd0" stroke-width=".8"/>
<path d="M164.2 340.5l3.4-3.4v2.2h3.8v2.4h-3.8v2.2z" fill="#ff8c28" stroke="#a42000" stroke-width=".9" stroke-linejoin="round"/>
<!-- frame disabled -->
<rect x="156.5" y="444.5" width="15" height="12" fill="#c8c8c8" stroke="#adadad"/><rect x="165" y="447.5" width="3.5" height="6" fill="none" stroke="#b8b8b8" stroke-width=".6"/>
<rect x="156.5" y="448.5" width="8" height="10" fill="#c6c6c6" stroke="#a6a6a6"/><path d="M160.5 450v7" stroke="#999" stroke-width="1"/><rect x="158.4" y="451.5" width="4.4" height="2" fill="#ccc" stroke="#999" stroke-width=".8"/>
</svg>
</body></html>
